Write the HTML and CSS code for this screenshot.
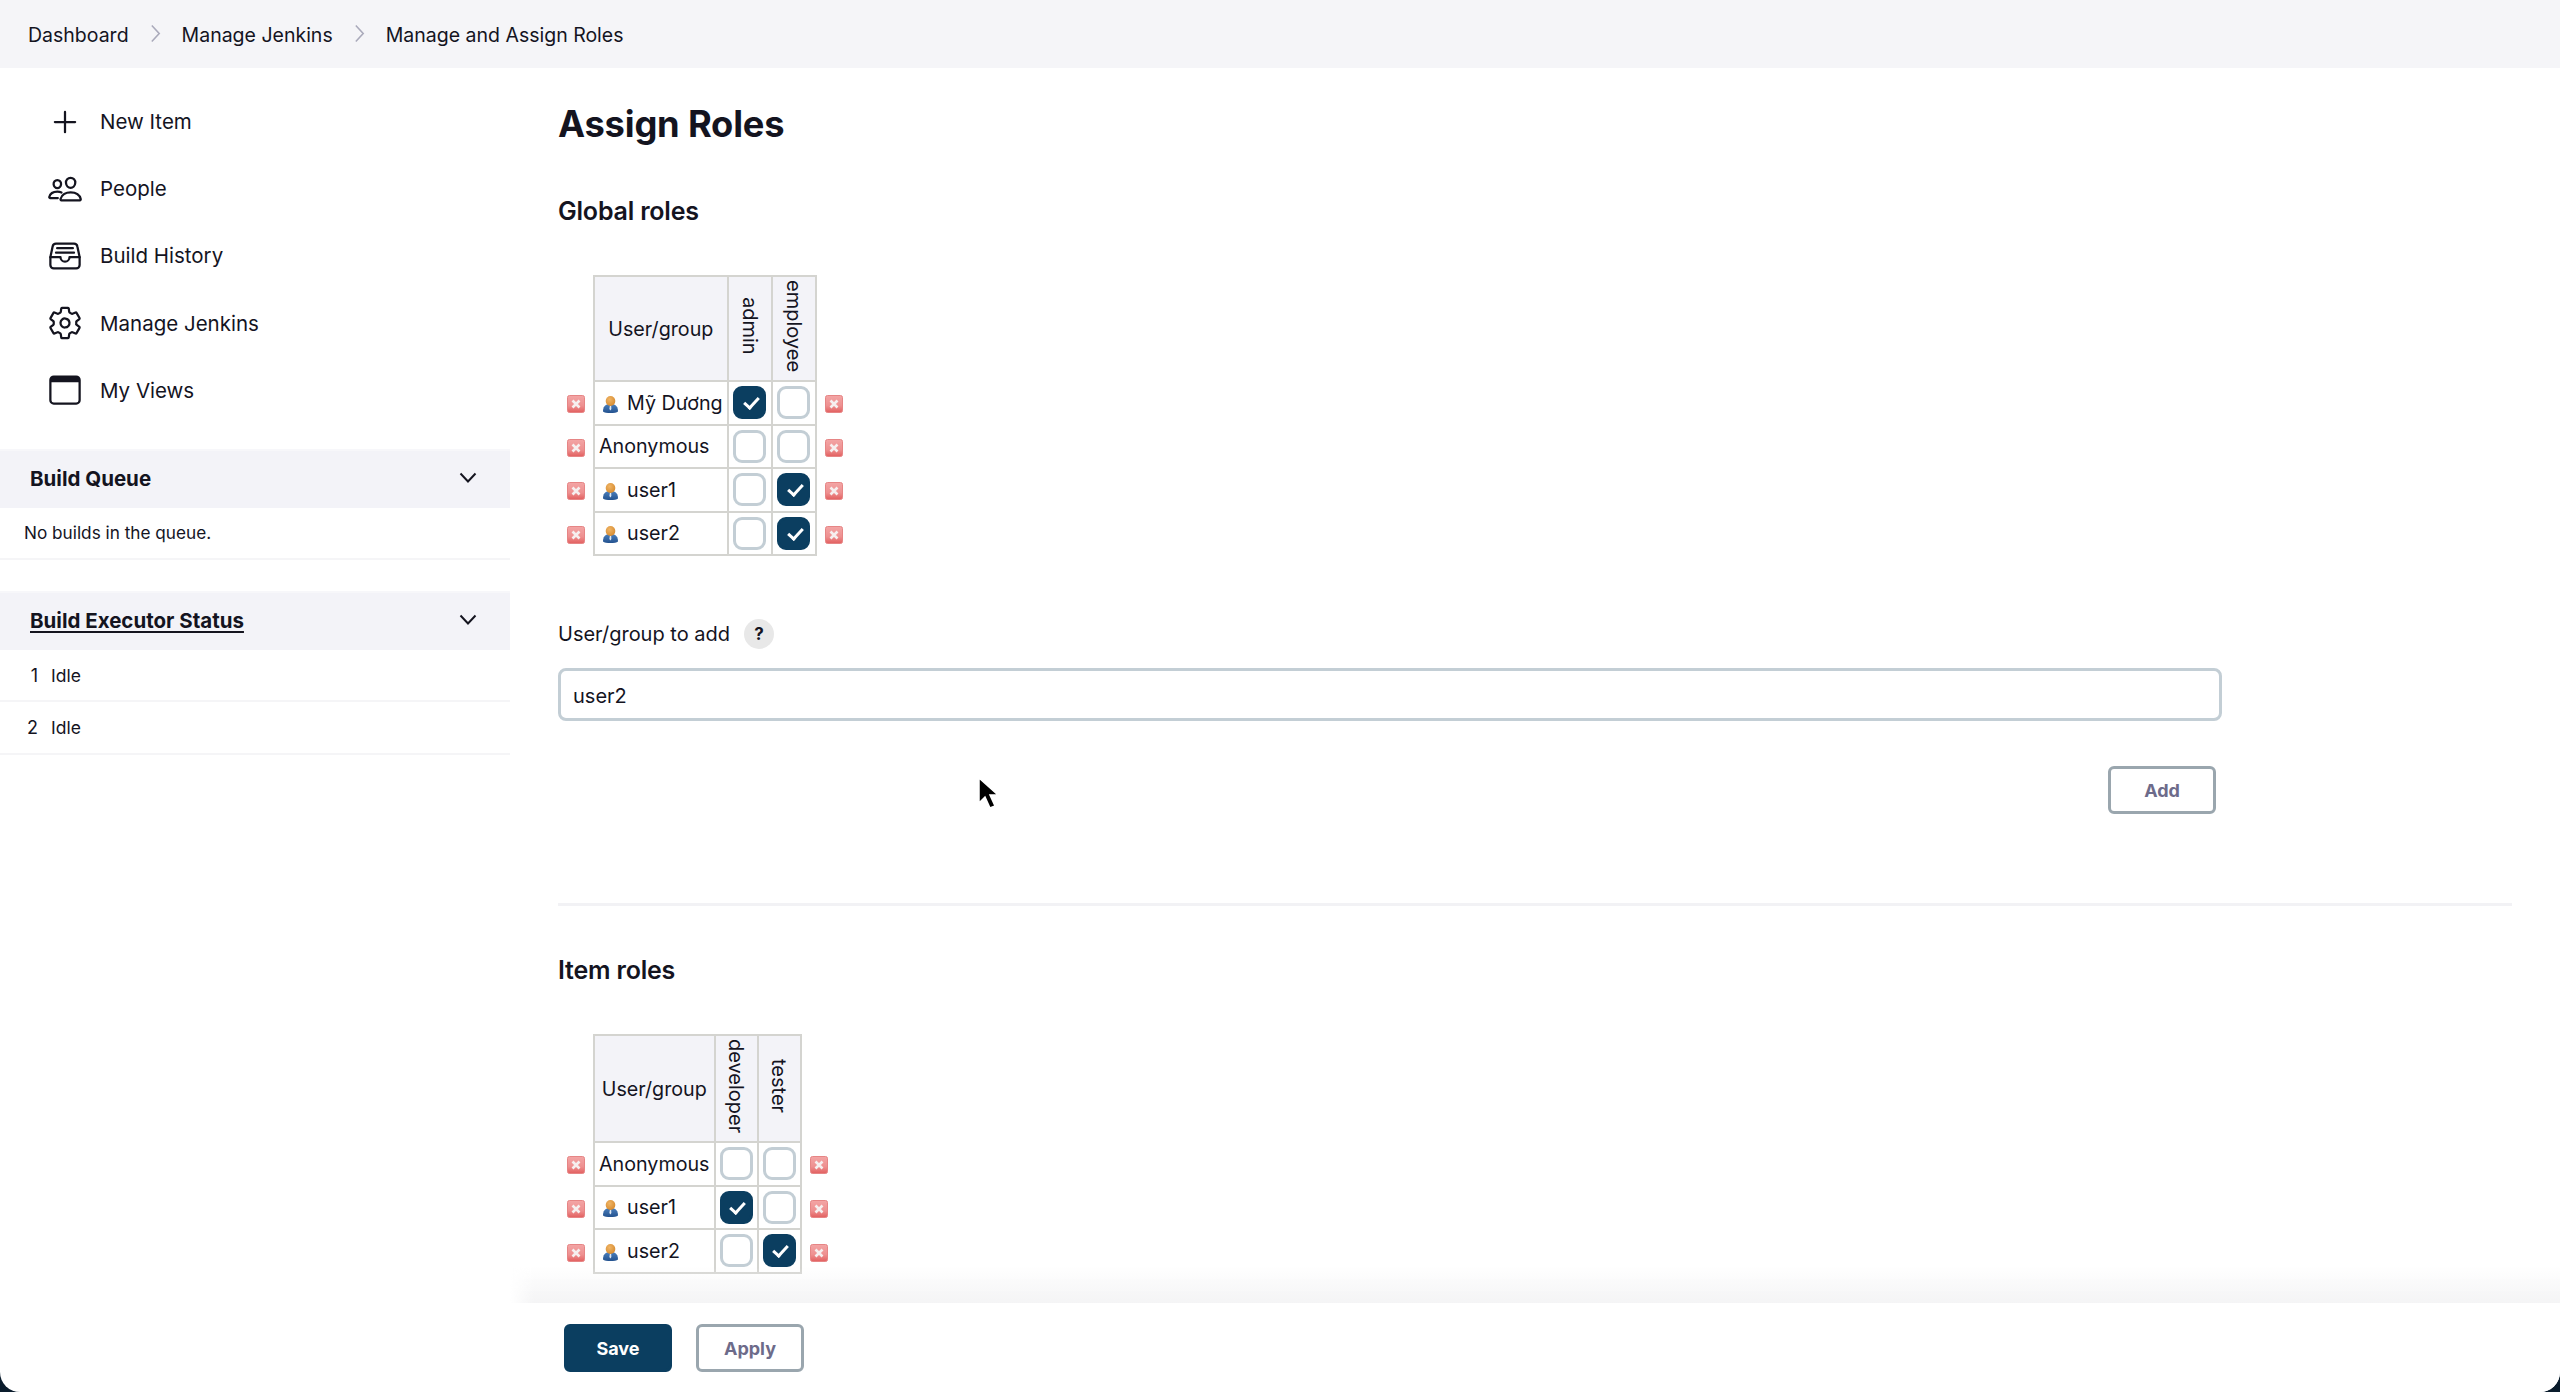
FILE: index.html
```html
<!DOCTYPE html>
<html lang="en">
<head>
<meta charset="utf-8">
<title>Assign Roles</title>
<link rel="stylesheet" href="styles.css">
</head>
<body>
<div class="app">
  <nav class="crumbs">
    <a>Dashboard</a>
    <svg class="crumb-sep" viewBox="0 0 10 18"><path d="M1.5 1.500l7 7.500-7 7.500"/></svg>
    <a>Manage Jenkins</a>
    <svg class="crumb-sep" viewBox="0 0 10 18"><path d="M1.5 1.500l7 7.500-7 7.500"/></svg>
    <a>Manage and Assign Roles</a>
  </nav>
  <div class="body">
    <aside class="side">
      <ul class="tasks">
        <li class="task"><svg class="ico" viewBox="0 0 512 512"><path d="M256 112v288M400 256H112"/></svg>New Item</li>
        <li class="task"><svg class="ico" viewBox="0 0 512 512"><path d="M402 168c-2.93 40.67-33.1 72-66 72s-63.12-31.32-66-72c-3-42.31 26.37-72 66-72s69 30.46 66 72z"/><path d="M336 304c-65.17 0-127.84 32.37-143.54 95.41-2.08 8.34 3.15 16.59 11.72 16.59h263.65c8.57 0 13.77-8.25 11.72-16.59C463.85 335.36 401.18 304 336 304z"/><path d="M200 185.94c-2.34 32.48-26.72 58.06-53 58.06s-50.7-25.57-53-58.06C91.61 152.15 115.34 128 147 128s55.39 24.77 53 57.94z"/><path d="M206 306c-18.05-8.27-37.93-11.45-59-11.45-52 0-102.1 25.85-114.65 76.2-1.65 6.66 2.53 13.25 9.37 13.25H154"/></svg>People</li>
        <li class="task"><svg class="ico" viewBox="0 0 512 512"><path d="M384 80H128c-26 0-43 14-48 40L48 272v112a48.14 48.14 0 0048 48h320a48.14 48.14 0 0048-48V272l-32-152c-5-27-23-40-48-40z"/><path d="M48 272h144M320 272h144M192 272a64 64 0 00128 0M144 144h224M128 208h256"/></svg>Build History</li>
        <li class="task"><svg class="ico" viewBox="0 0 512 512"><path d="M262.29 192.31a64 64 0 1057.4 57.4 64.13 64.13 0 00-57.4-57.4zM416.39 256a154.34 154.34 0 01-1.53 20.79l45.21 35.46a10.81 10.81 0 012.45 13.75l-42.77 74a10.81 10.81 0 01-13.14 4.59l-44.9-18.08a16.11 16.11 0 00-15.17 1.75A164.48 164.48 0 01325 400.8a15.94 15.94 0 00-8.82 12.14l-6.73 47.89a11.08 11.08 0 01-10.68 9.17h-85.54a11.11 11.11 0 01-10.69-8.87l-6.72-47.82a16.07 16.07 0 00-9-12.22 155.3 155.3 0 01-21.46-12.57 16 16 0 00-15.11-1.71l-44.89 18.07a10.81 10.81 0 01-13.14-4.58l-42.77-74a10.8 10.8 0 012.45-13.75l38.21-30a16.05 16.05 0 006-14.08c-.36-4.17-.58-8.33-.58-12.5s.21-8.27.58-12.35a16 16 0 00-6.07-13.94l-38.19-30A10.81 10.81 0 0149.48 186l42.77-74a10.81 10.81 0 0113.14-4.59l44.9 18.08a16.11 16.11 0 0015.17-1.75A164.48 164.48 0 01187 111.2a15.94 15.94 0 008.82-12.14l6.73-47.89A11.08 11.08 0 01213.23 42h85.54a11.11 11.11 0 0110.69 8.87l6.72 47.82a16.07 16.07 0 009 12.22 155.3 155.3 0 0121.46 12.57 16 16 0 0015.11 1.71l44.89-18.07a10.81 10.81 0 0113.14 4.58l42.77 74a10.8 10.8 0 01-2.45 13.75l-38.21 30a16.05 16.05 0 00-6.05 14.08c.33 4.14.55 8.3.55 12.47z"/></svg>Manage Jenkins</li>
        <li class="task"><svg class="ico" viewBox="0 0 512 512"><rect x="48" y="64" width="416" height="384" rx="48"/><path class="ico-fill" d="M96 64h320a48 48 0 0148 48v32H48v-32a48 48 0 0148-48z"/></svg>My Views</li>
      </ul>

      <section class="pane queue">
        <header class="pane-head"><span>Build Queue</span><svg class="chev" viewBox="0 0 18 12"><path d="M1.5 1.5L9 9.5l7.5-8"/></svg></header>
        <div class="pane-row note">No builds in the queue.</div>
      </section>

      <section class="pane">
        <header class="pane-head"><span class="linked">Build Executor Status</span><svg class="chev" viewBox="0 0 18 12"><path d="M1.5 1.5L9 9.5l7.5-8"/></svg></header>
        <div class="pane-row exec"><span class="num">1</span>Idle</div>
        <div class="pane-row exec"><span class="num">2</span>Idle</div>
      </section>
    </aside>

    <main class="main">
      <h1 class="title">Assign Roles</h1>
      <h2 class="sub">Global roles</h2>

      <div class="matrix global">
        <div class="x-col">
          <svg class="x"><use href="#del"/></svg><svg class="x"><use href="#del"/></svg><svg class="x"><use href="#del"/></svg><svg class="x"><use href="#del"/></svg>
        </div>
        <table class="roles">
          <tr class="head"><th class="ug">User/group</th><th class="role"><span>admin</span></th><th class="role"><span>employee</span></th></tr>
          <tr><td class="name"><svg class="usr"><use href="#usr"/></svg>Mỹ Dương</td><td class="c"><i class="box on"></i></td><td class="c"><i class="box"></i></td></tr>
          <tr><td class="name plain">Anonymous</td><td class="c"><i class="box"></i></td><td class="c"><i class="box"></i></td></tr>
          <tr><td class="name"><svg class="usr"><use href="#usr"/></svg>user1</td><td class="c"><i class="box"></i></td><td class="c"><i class="box on"></i></td></tr>
          <tr><td class="name"><svg class="usr"><use href="#usr"/></svg>user2</td><td class="c"><i class="box"></i></td><td class="c"><i class="box on"></i></td></tr>
        </table>
        <div class="x-col">
          <svg class="x"><use href="#del"/></svg><svg class="x"><use href="#del"/></svg><svg class="x"><use href="#del"/></svg><svg class="x"><use href="#del"/></svg>
        </div>
      </div>

      <div class="add-label"><span>User/group to add</span><span class="help">?</span></div>
      <input class="add-input" type="text" value="user2">
      <div class="add-row"><button class="btn ghost add">Add</button></div>
      <hr class="rule">

      <h2 class="sub item">Item roles</h2>
      <div class="matrix">
        <div class="x-col">
          <svg class="x"><use href="#del"/></svg><svg class="x"><use href="#del"/></svg><svg class="x"><use href="#del"/></svg>
        </div>
        <table class="roles items">
          <tr class="head"><th class="ug">User/group</th><th class="role"><span>developer</span></th><th class="role"><span>tester</span></th></tr>
          <tr><td class="name plain">Anonymous</td><td class="c"><i class="box"></i></td><td class="c"><i class="box"></i></td></tr>
          <tr><td class="name"><svg class="usr"><use href="#usr"/></svg>user1</td><td class="c"><i class="box on"></i></td><td class="c"><i class="box"></i></td></tr>
          <tr><td class="name"><svg class="usr"><use href="#usr"/></svg>user2</td><td class="c"><i class="box"></i></td><td class="c"><i class="box on"></i></td></tr>
        </table>
        <div class="x-col">
          <svg class="x"><use href="#del"/></svg><svg class="x"><use href="#del"/></svg><svg class="x"><use href="#del"/></svg>
        </div>
      </div>
    </main>
  </div>

  <div class="bar">
    <button class="btn save">Save</button>
    <button class="btn ghost">Apply</button>
  </div>

  <svg class="cursor" viewBox="0 0 24 34"><path d="M2 1v25l6-6 5 11 5-2-5-11h8z"/></svg>
</div>

<svg class="defs" width="0" height="0">
  <defs>
    <linearGradient id="redg" x1="0" y1="0" x2="0" y2="1"><stop offset="0" stop-color="#f3a5a5"/><stop offset=".6" stop-color="#ee9090"/><stop offset="1" stop-color="#e25f5f"/></linearGradient>
    <radialGradient id="headg" cx=".4" cy=".35" r=".7"><stop offset="0" stop-color="#f0b566"/><stop offset="1" stop-color="#d68a2e"/></radialGradient>
    <linearGradient id="bodyg" x1="0" y1="0" x2="0" y2="1"><stop offset="0" stop-color="#4c80bd"/><stop offset="1" stop-color="#23528f"/></linearGradient>
    <symbol id="del" viewBox="0 0 18 18">
      <rect x=".5" y=".5" width="17" height="17" rx="2" fill="url(#redg)" stroke="#e68585"/>
      <path d="M5.5 5.5l7 7M12.5 5.5l-7 7" stroke="#f6efef" stroke-width="2.6"/>
    </symbol>
    <symbol id="usr" viewBox="0 0 15 17">
      <path d="M0 15.500c0-4 1.500-7.500 7.500-7.500s7.500 3.500 7.500 7.500c-2 2-13 2-15 0z" fill="url(#bodyg)"/>
      <ellipse cx="7.500" cy="5" rx="4.800" ry="5" fill="url(#headg)"/>
      <path d="M6.800 10h1.400l.2 3-1 1.600-1-1.600z" fill="#dfe8f3"/>
    </symbol>
  </defs>
</svg>
</body>
</html>
```
FILE: styles.css
```css
* { box-sizing: border-box; }
html, body { margin: 0; padding: 0; height: 100%; overflow: hidden; }
body { background: #0a1c2c; color: #14141f; font-family: Inter, "Liberation Sans", sans-serif; font-size: 20px; }

.app { position: relative; height: 1392px; display: flex; flex-direction: column; overflow: hidden; background: #fff; border-radius: 0 0 20px 20px; }

.crumbs { height: 68px; flex: none; background: #f5f5f8; display: flex; align-items: center; padding: 1px 0 0 28px; font-size: 19.500px; }
.crumb-sep { width: 11px; height: 19px; margin: -2px 21px 0 21px; }
.crumb-sep path { fill: none; stroke: #aaaabb; stroke-width: 1.500; }

.body { flex: 1; display: flex; min-height: 0; }

.side { width: 510px; flex: none; padding-top: 20px; }
.tasks { list-style: none; margin: 0; padding: 0 0 0 47px; }
.task { height: 67.2px; display: flex; align-items: center; gap: 17px; font-size: 20.500px; }
.ico { width: 36px; height: 36px; flex: none; }
.ico path, .ico rect { fill: none; stroke: #14141f; stroke-width: 32; stroke-linecap: round; stroke-linejoin: round; }
.ico .ico-fill { fill: #14141f; stroke: none; }

.queue { margin-top: 25px; margin-bottom: 31px; }
.pane-head { height: 59px; background: #f3f3f8; border-top: 2px solid #f7f7fa; display: flex; align-items: center; justify-content: space-between; padding: 0 33px 2px 30px; font-weight: 700; font-size: 20.500px; }
.linked { text-decoration: underline; text-underline-offset: 3px; }
.chev { width: 18px; height: 12px; }
.chev path { fill: none; stroke: #14141f; stroke-width: 2; }
.pane-row { border-bottom: 2px solid #f5f5f7; display: flex; align-items: center; }
.note { height: 52px; padding-left: 24px; font-size: 17.200px; }
.exec { height: 52.5px; font-size: 17.500px; }
.num { width: 51px; text-align: right; padding-right: 13px; font-size: 18px; }

.main { flex: 1; position: relative; padding: 0 48px; min-width: 0; }
.title { margin: 34px 0 0; font-size: 36.300px; line-height: 44px; font-weight: 700; letter-spacing: -.2px; }
.sub { margin: 46px 0 0; font-size: 25px; line-height: 38px; font-weight: 600; letter-spacing: -.2px; }
.sub.item { margin-top: 45px; }

.matrix { display: flex; align-items: flex-end; margin-top: 45px; margin-left: 9px; }
.x-col { display: flex; flex-direction: column; flex: none; width: 18px; gap: 25.600px; padding-bottom: 12px; }
.x { display: block; width: 18px; height: 18px; }
.roles { border-collapse: collapse; margin: 0 8px; background: #fff; font-size: 19.700px; }
.roles th, .roles td { border: 2px solid #d4d4d0; padding: 0; font-weight: 400; }
.roles .head th { background: #f3f3f8; height: 105px; }
.roles.items .head th { height: 107px; }
.roles tr { height: 43.500px; }
.ug { width: 133px; text-align: center; }
.items .ug { width: 120px; }
.role { width: 44px; }
.items .role { width: 43px; }
.role span { display: inline-block; writing-mode: vertical-rl; font-size: 20px; line-height: 24px; }
.name { white-space: nowrap; padding: 0 4px !important; }
.usr { width: 15px; height: 17px; margin: 0 9px 0 4px; vertical-align: -3px; }
.c { text-align: center; vertical-align: middle; }
.box { display: block; width: 33px; height: 33px; margin: 0 auto; border: 3px solid #c3ced5; border-radius: 9px; background: #fff; position: relative; }
.box.on { background: #0b3e60; border-color: #0b3e60; }
.box.on::after { content: ""; position: absolute; left: 10.500px; top: 5px; width: 6px; height: 12px; border: solid #fff; border-width: 0 3px 3px 0; transform: rotate(42deg); }

.add-label { display: flex; align-items: center; gap: 14px; margin-top: 62px; height: 32px; }
.help { width: 30px; height: 30px; border-radius: 50%; background: #e8e8e8; font-size: 17px; font-weight: 700; display: flex; align-items: center; justify-content: center; }
.add-input { display: block; width: 1664px; height: 53px; margin-top: 18px; border: 3px solid #c3ced5; border-radius: 8px; font: inherit; color: inherit; padding: 2px 12px 0; background: #fff; outline: none; }
.add-row { display: flex; justify-content: flex-end; width: 1658px; margin-top: 45px; }
.btn { width: 108px; height: 48px; border-radius: 6px; font: 700 18px Inter, "Liberation Sans", sans-serif; border: 3px solid #0b3e60; background: #0b3e60; color: #fff; padding: 0; }
.btn.ghost { background: #fff; border-color: #9aa6ae; color: #6d6b8a; }
.rule { border: 0; height: 3px; background: #f2f2f5; margin: 89px 0 0; }

.bar { position: absolute; left: 510px; right: 0; bottom: 0; height: 89px; display: flex; align-items: flex-start; gap: 24px; padding: 21px 0 0 54px; background: #fff; }
.bar::before { content: ""; position: absolute; left: 0; right: 0; top: -36px; height: 36px; background: linear-gradient(to bottom, rgba(244,244,245,0), #f4f4f5); -webkit-mask-image: linear-gradient(to right, transparent, #000 24px); mask-image: linear-gradient(to right, transparent, #000 24px); pointer-events: none; }

.cursor { position: absolute; left: 977px; top: 777px; width: 24px; height: 34px; }
.cursor path { fill: #000; stroke: #fff; stroke-width: 1.500; }

.defs { position: absolute; }
```
